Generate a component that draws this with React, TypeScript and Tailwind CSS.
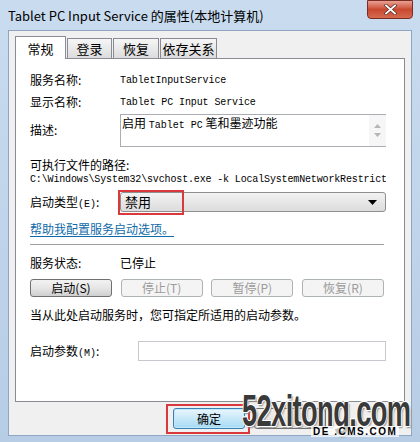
import React from "react";

const cjk = "font-['Microsoft_YaHei','Noto_Sans_CJK_SC',sans-serif]";
const mono = "font-['Liberation_Mono','Noto_Sans_CJK_SC',monospace]";

const Tab: React.FC<{ label: string; active?: boolean; w: string }> = ({ label, active, w }) => (
  <div
    className={
      active
        ? `${w} h-[23px] -mb-px z-10 bg-white border border-b-0 border-[#898c95] flex items-start justify-center pt-[2px] text-[13px] text-black`
        : `${w} h-[20px] bg-gradient-to-b from-[#f6f6f6] to-[#dcdcdc] border border-b-0 border-[#898c95] flex items-center justify-center text-[13px] text-black`
    }
  >
    {label}
  </div>
);

const Btn: React.FC<{ label: string; disabled?: boolean }> = ({ label, disabled }) => (
  <div
    className={
      disabled
        ? "w-[82px] h-[18px] rounded-[3px] border border-[#adb2b5] bg-[#f4f4f4] text-[#9b9b9b] text-[12px] flex items-center justify-center"
        : "w-[82px] h-[18px] rounded-[3px] border border-[#707070] bg-gradient-to-b from-[#f2f2f2] via-[#e6e6e6] to-[#cfcfcf] text-black text-[12px] flex items-center justify-center"
    }
  >
    {label}
  </div>
);

export default function App() {
  return (
    <div className={`${cjk} w-[420px] h-[442px] bg-gradient-to-b from-[#c9dcef] to-[#b7cde6] flex flex-col relative overflow-hidden`}>
      {/* title bar */}
      <div className="h-[30px] flex items-center pl-[8px] pt-[1px] text-[13px] text-black">
        Tablet PC Input Service 的属性(本地计算机)
      </div>
      <div className="absolute top-0 right-[7px] w-[46px] h-[19px] rounded-b-[4px] border border-[#7a2b22] bg-gradient-to-b from-[#e8a093] via-[#c9482f] to-[#d46a4f] flex items-center justify-center">
        <svg width="13" height="11" viewBox="0 0 13 11">
          <path d="M2 1.5 L11 9.5 M11 1.5 L2 9.5" stroke="#5a2b24" strokeWidth="3.2" strokeLinecap="square" />
          <path d="M2 1.5 L11 9.5 M11 1.5 L2 9.5" stroke="#ffffff" strokeWidth="1.8" strokeLinecap="square" />
        </svg>
      </div>

      {/* client area */}
      <div className="mx-[8px] flex-1 mb-[6px] bg-[#f0f0f0] border border-[#8ea6c1] flex flex-col">
        <div className="flex items-end pl-[6px] pt-[5px] gap-[1px]">
          <Tab label="常规" active w="w-[51px]" />
          <Tab label="登录" w="w-[45px]" />
          <Tab label="恢复" w="w-[46px]" />
          <Tab label="依存关系" w="w-[57px]" />
        </div>
        <div className="mx-[6px] h-[344px] bg-white border border-[#898c95] pl-[14px] pr-[18px] text-[12px] text-black">
          <div className="flex items-center h-[22px] mt-[10px]">
            <span className="w-[90px]">服务名称:</span>
            <span className={`${mono} text-[10px] tracking-[-0.1px]`}>TabletInputService</span>
          </div>
          <div className="flex items-center h-[22px]">
            <span className="w-[90px]">显示名称:</span>
            <span className={`${mono} text-[10px] tracking-[-0.1px]`}>Tablet PC Input Service</span>
          </div>
          <div className="flex mt-[1px]">
            <span className="w-[90px] pt-[7px]">描述:</span>
            <div className="w-[266px] h-[33px] border border-[#abadb3] border-r-0 flex">
              <div className="flex-1 pl-[1px] leading-[16px]">
                启用 <span className={`${mono} text-[10px]`}>Tablet PC</span> 笔和墨迹功能
              </div>
              <div className="w-[17px] bg-[#f6f6f6] flex flex-col items-center justify-center gap-[5px]">
                <svg width="7" height="4" viewBox="0 0 7 4"><path d="M0 4 L3.5 0 L7 4Z" fill="#b5b5b5" /></svg>
                <svg width="7" height="4" viewBox="0 0 7 4"><path d="M0 0 L3.5 4 L7 0Z" fill="#b5b5b5" /></svg>
              </div>
            </div>
          </div>
          <div className="mt-[10px] leading-[16px]">可执行文件的路径:</div>
          <div className={`${mono} text-[10px] tracking-[-0.15px] leading-[14px] whitespace-nowrap overflow-hidden w-[356px]`}>
            C:\Windows\System32\svchost.exe -k LocalSystemNetworkRestricted
          </div>
          <div className="flex items-center mt-[5px]">
            <span className="w-[90px]">
              启动类型<span className={`${mono} text-[10px]`}>(E)</span>:
            </span>
            <div className="relative w-[266px] h-[20px] rounded-[3px] border border-[#8e8f8f] bg-gradient-to-b from-[#f2f2f2] to-[#dcdcdc] flex items-center pl-[4px] justify-between pr-[8px]">
              <span className="text-[13px]">禁用</span>
              <svg width="9" height="5" viewBox="0 0 9 5"><path d="M0 0 L9 0 L4.5 5Z" fill="#000" /></svg>
              <div className="absolute left-[-3px] top-[-3px] w-[66px] h-[25px] border-[2px] border-[#d9393c]" />
            </div>
          </div>
          <div className="mt-[8px] text-[#0f6aa8] underline underline-offset-2">帮助我配置服务启动选项。</div>
          <div className="h-px bg-[#a0a0a0] mt-[6px] mr-[2px]" />
          <div className="flex items-center h-[20px] mt-[8px]">
            <span className="w-[90px]">服务状态:</span>
            <span>已停止</span>
          </div>
          <div className="flex justify-between mt-[6px] mr-[2px]">
            <Btn label="启动(S)" />
            <Btn label="停止(T)" disabled />
            <Btn label="暂停(P)" disabled />
            <Btn label="恢复(R)" disabled />
          </div>
          <div className="mt-[9px] leading-[18px]">当从此处启动服务时，您可指定所适用的启动参数。</div>
          <div className="flex items-center mt-[17px]">
            <span className="w-[108px]">
              启动参数<span className={`${mono} text-[10px]`}>(M)</span>:
            </span>
            <div className="w-[248px] h-[20px] border border-[#c5c9cf]" />
          </div>
        </div>
        <div className="flex-1 flex items-start pl-[164px] pt-[6px] gap-[9px]">
          <div className="relative w-[72px] h-[21px] rounded-[3px] border border-[#3c7fb1] bg-gradient-to-b from-[#eaf6fd] via-[#c7e8f8] to-[#a7d9f5] flex items-center justify-center text-[12px] shadow-[inset_0_0_0_1px_#bfeafe]">
            确定
            <div className="absolute left-[-8px] top-[-5px] w-[84px] h-[30px] border-[2px] border-[#d9393c]" />
          </div>
          <div className="w-[72px] h-[21px] rounded-[3px] border border-[#707070] bg-gradient-to-b from-[#f2f2f2] to-[#dcdcdc]" />
        </div>
      </div>

      {/* watermark */}
      <div className="absolute left-[242px] top-[389px] origin-left scale-x-[0.62] text-[44px] leading-[44px] font-bold tracking-[-1px] text-[#3a3a3a] font-['Liberation_Sans',sans-serif] [text-shadow:1px_1px_0_#fff,-1px_-1px_0_#fff,1px_-1px_0_#fff,-1px_1px_0_#fff,2px_2px_2px_#888]">
        52xitong.com
      </div>
      <div className="absolute left-[311px] top-[426px] text-[10px] leading-[11px] font-bold tracking-[1.5px] text-black bg-white/70 px-[2px] font-['Liberation_Sans',sans-serif]">
        DE .CMS.COM
      </div>
    </div>
  );
}
